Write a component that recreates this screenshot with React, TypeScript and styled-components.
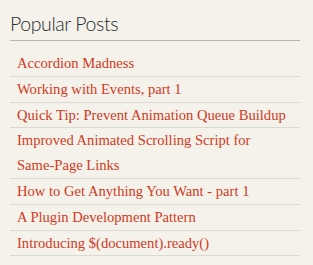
import styled, { createGlobalStyle } from 'styled-components';

const Global = createGlobalStyle`
  html, body { margin: 0; padding: 0; background: #f4f2eb; }
`;

const Widget = styled.div`
  padding: 13px 13px 0 10px;
`;

const Title = styled.h3`
  margin: 0;
  padding: 0 0 5px;
  font-family: Lato, "Open Sans", sans-serif;
  font-weight: 300;
  font-size: 19.5px;
  letter-spacing: -0.4px;
  line-height: 22px;
  color: #262c2e;
  border-bottom: 1px solid #b9b8a8;
`;

const List = styled.ul`
  list-style: none;
  margin: 10px 0 0;
  padding: 0;
`;

const Item = styled.li`
  border-bottom: 1px solid #dcd9d1;
  padding: 0 10px 0 7px;
  line-height: 24.8px;
`;

const PostLink = styled.a`
  font-family: "Liberation Serif", serif;
  font-size: 14.6px;
  color: #d03a1d;
  text-decoration: none;
`;

const posts = [
  'Accordion Madness',
  'Working with Events, part 1',
  'Quick Tip: Prevent Animation Queue Buildup',
  'Improved Animated Scrolling Script for Same-Page Links',
  'How to Get Anything You Want - part 1',
  'A Plugin Development Pattern',
  'Introducing $(document).ready()',
];

export default function App() {
  return (
    <>
      <Global />
      <Widget>
        <Title>Popular Posts</Title>
        <List>
          {posts.map(p => (
            <Item key={p}><PostLink href="#">{p}</PostLink></Item>
          ))}
        </List>
      </Widget>
    </>
  );
}
